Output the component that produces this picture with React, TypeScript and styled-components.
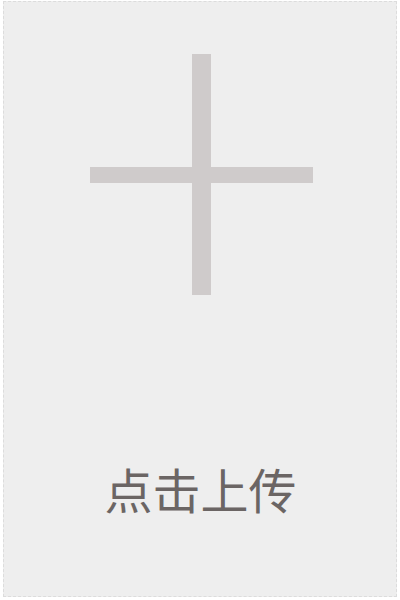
import React from "react";
import styled, { createGlobalStyle } from "styled-components";

const Global = createGlobalStyle`
  html, body { margin: 0; padding: 0; background: #ffffff; }
  body { font-family: "Noto Sans CJK SC", "Noto Sans", sans-serif; }
`;

const Page = styled.div`
  width: 400px;
  height: 600px;
  box-sizing: border-box;
  padding: 1px 3px 3px 3px;
  display: flex;
`;

const UploadBox = styled.div`
  flex: 1;
  box-sizing: border-box;
  border: 1px dashed #dcdcdc;
  background: #eeeeee;
  display: flex;
  flex-direction: column;
  align-items: center;
  cursor: pointer;
`;

const PlusWrap = styled.div`
  margin-top: 52px;
  margin-left: 2px;
  width: 223px;
  height: 241px;
  display: flex;
`;

const Label = styled.div`
  margin-top: 165px;
  margin-left: 1px;
  font-size: 48px;
  line-height: 56px;
  color: #6b6564;
  letter-spacing: 0;
`;

export default function App() {
  return (
    <>
      <Global />
      <Page>
        <UploadBox>
          <PlusWrap>
            <svg width="223" height="241" viewBox="0 0 223 241">
              <rect x="102" y="0" width="19" height="241" fill="#cfcbcb" />
              <rect x="0" y="113" width="223" height="16" fill="#cfcbcb" />
            </svg>
          </PlusWrap>
          <Label>点击上传</Label>
        </UploadBox>
      </Page>
    </>
  );
}
